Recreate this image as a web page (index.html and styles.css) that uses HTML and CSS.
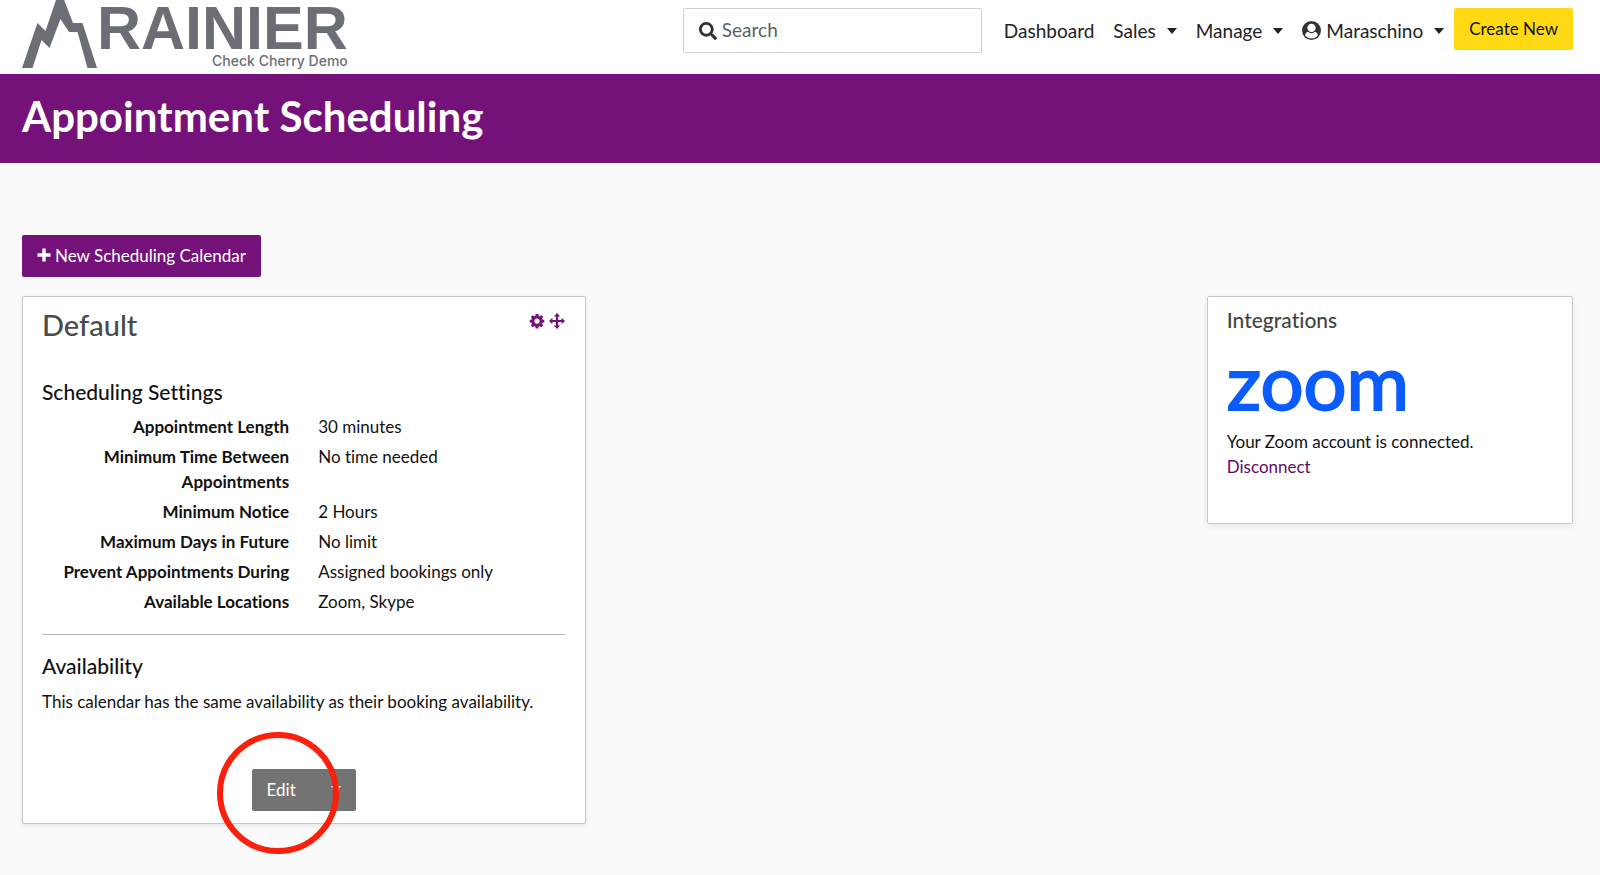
FILE: index.html
```html
<!DOCTYPE html>
<html lang="en">
<head>
<meta charset="utf-8">
<meta name="viewport" content="width=device-width, initial-scale=1">
<title>Appointment Scheduling</title>
<link rel="stylesheet" href="styles.css">
</head>
<body>
<header class="topbar">
  <a class="brand" href="#" aria-label="Rainier">
    <svg class="brand-mark" viewBox="0 0 75 68" aria-hidden="true"><path d="M0 68 15.500 23 23.500 31 35 -3H41L51 23H60.500L75 68H65.500L55.500 32H47L38.500 19 27.500 48 19.500 40 10.500 68Z"/></svg>
    <span class="brand-text">
      <span class="brand-name">RAINIER</span>
      <span class="brand-sub">Check Cherry Demo</span>
    </span>
  </a>
  <div class="topbar-right">
    <label class="search">
      <svg class="search-icon" viewBox="0 0 512 512" aria-hidden="true"><path d="M505 442.700 405.300 343c-4.500-4.500-10.600-7-17-7H372c27.600-35.300 44-79.700 44-128C416 93.100 322.900 0 208 0S0 93.100 0 208s93.100 208 208 208c48.300 0 92.700-16.400 128-44v16.300c0 6.400 2.500 12.500 7 17l99.700 99.700c9.400 9.400 24.600 9.400 33.900 0l28.300-28.300c9.400-9.400 9.400-24.600.1-34zM208 336c-70.700 0-128-57.200-128-128 0-70.700 57.200-128 128-128 70.700 0 128 57.200 128 128 0 70.700-57.200 128-128 128z"/></svg>
      <input class="search-input" type="search" placeholder="Search" aria-label="Search">
    </label>
    <nav class="nav" aria-label="Main">
      <a class="nav-item" href="#">Dashboard</a>
      <button class="nav-item" type="button">Sales <span class="caret"></span></button>
      <button class="nav-item" type="button">Manage <span class="caret"></span></button>
      <button class="nav-item" type="button"><svg class="user-icon" viewBox="0 0 20 20" aria-hidden="true"><circle class="user-disc" cx="10" cy="10" r="10"/><circle class="user-light" cx="10" cy="7.200" r="4.400"/><path class="user-light" d="M6.300 11.400c2.100 2 5.300 2 7.400 0 1.800.4 2.700 1.700 3 3.800a8.600 8.600 0 0 1-13.400 0c.3-2.100 1.200-3.400 3-3.800z"/></svg><span class="user-name">Maraschino</span> <span class="caret"></span></button>
    </nav>
    <button class="btn btn-create" type="button">Create New</button>
  </div>
</header>

<div class="page-band"><h1 class="page-title">Appointment Scheduling</h1></div>

<main class="content">
  <button class="btn btn-new" type="button"><svg class="plus-icon" viewBox="0 0 14 14" aria-hidden="true"><path d="M5.300.5h3.400v4.800h4.800v3.400H8.700v4.800H5.300V8.700H.5V5.300h4.800z"/></svg>New Scheduling Calendar</button>
  <div class="columns">
    <section class="card">
      <div class="card-head">
        <h2 class="card-title">Default</h2>
        <div class="card-tools">
          <button class="tool" type="button" aria-label="Settings"><svg class="tool-icon" viewBox="0 0 16 16"><path fill-rule="evenodd" d="M6.700 1h2.600l.4 1.800 1 .4 1.600-1 1.800 1.800-1 1.600.4 1 1.800.4v2.400l-1.800.4-.4 1 1 1.600-1.800 1.800-1.600-1-1 .4-.4 1.800H6.700l-.4-1.800-1-.4-1.600 1-1.800-1.800 1-1.600-.4-1L.7 9.400V7l1.800-.4.4-1-1-1.600 1.800-1.800 1.600 1 1-.4zM8 5.500a2.600 2.600 0 1 0 0 5.200 2.600 2.600 0 0 0 0-5.200z"/></svg></button>
          <button class="tool" type="button" aria-label="Move"><svg class="tool-icon" viewBox="0 0 16 16"><path d="M8 0l3.200 3.400H9.100v3.500h3.500V4.800L16 8l-3.400 3.200V9.100H9.100v3.500h2.100L8 16l-3.200-3.400h2.100V9.100H3.400v2.100L0 8l3.400-3.200v2.100h3.500V3.400H4.800z"/></svg></button>
        </div>
      </div>
      <h3 class="section-title section-first">Scheduling Settings</h3>
      <dl class="settings">
        <div class="row"><dt>Appointment Length</dt><dd>30 minutes</dd></div>
        <div class="row"><dt>Minimum Time Between Appointments</dt><dd>No time needed</dd></div>
        <div class="row"><dt>Minimum Notice</dt><dd>2 Hours</dd></div>
        <div class="row"><dt>Maximum Days in Future</dt><dd>No limit</dd></div>
        <div class="row"><dt>Prevent Appointments During</dt><dd>Assigned bookings only</dd></div>
        <div class="row"><dt>Available Locations</dt><dd>Zoom, Skype</dd></div>
      </dl>
      <hr class="rule">
      <h3 class="section-title">Availability</h3>
      <p class="note">This calendar has the same availability as their booking availability.</p>
      <div class="actions">
        <div class="edit-group">
          <button class="btn btn-edit" type="button">Edit</button>
          <button class="btn btn-more" type="button" aria-label="More actions"><span class="caret"></span></button>
          <span class="highlight-ring"></span>
        </div>
      </div>
    </section>
    <aside class="card card-side">
      <h2 class="side-title">Integrations</h2>
      <div class="zoom-logo">zoom</div>
      <p class="side-text">Your Zoom account is connected.</p>
      <a class="link" href="#">Disconnect</a>
    </aside>
  </div>
</main>
</body>
</html>
```
FILE: styles.css
```css
* { box-sizing: border-box; }

body {
  margin: 0;
  background: #fafafa;
  color: #111;
  font: 17px/25px Lato, "Open Sans", sans-serif;
  font-variant-ligatures: none;
}

h1, h2, h3, p, dl, dd { margin: 0; }
button, input { font: inherit; color: inherit; }
button { cursor: pointer; }
svg { display: block; flex: none; }

.topbar {
  display: flex;
  justify-content: space-between;
  min-height: 74px;
  padding: 0 27px 0 22px;
  background: #fff;
}
.brand {
  display: flex;
  color: #6b6e75;
  text-decoration: none;
}
.brand-mark { width: 75px; height: 68px; fill: currentColor; }
.brand-text { display: flex; flex-direction: column; align-items: flex-end; }
.brand-name { font: 700 61px/56px "Liberation Sans", Arial, sans-serif; }
.brand-sub { font: 500 14px/10px Inter, sans-serif; }

.topbar-right { display: flex; align-items: flex-start; padding-top: 8px; }
.search {
  display: flex;
  align-items: center;
  gap: 5px;
  width: 299px;
  height: 45px;
  margin-right: 22px;
  padding: 0 15px;
  border: 1px solid #d2d2d2;
  border-radius: 2px;
}
.search-icon { width: 18px; height: 18px; fill: #333; }
.search-input {
  flex: 1;
  min-width: 0;
  padding: 0 0 2px;
  border: 0;
  outline: 0;
  background: none;
  font-size: 19px;
}
.search-input::placeholder { color: #5c5f63; opacity: 1; }

.nav { display: flex; gap: 19px; padding-top: 10px; margin-right: 10px; }
.nav-item {
  display: flex;
  align-items: center;
  padding: 0;
  border: 0;
  background: none;
  color: #222;
  font-size: 19px;
  line-height: 25px;
  text-decoration: none;
}
.caret {
  margin-left: 11px;
  border: 5px solid transparent;
  border-top: 6px solid currentColor;
  border-bottom: 0;
}
.user-icon { width: 19px; height: 19px; margin-right: 5px; }
.user-disc { fill: #333; }
.user-light { fill: #fff; }

.btn {
  display: inline-flex;
  align-items: center;
  justify-content: center;
  height: 42px;
  padding: 0 15px 2px;
  border: 0;
  border-radius: 2px;
}
.btn-create { background: #ffd914; color: #111; }

.page-band { padding: 17px 22px 22px; background: #75127a; }
.page-title { color: #fff; font-size: 42px; font-weight: 700; line-height: 50px; }

.content { padding: 72px 27px 50px 22px; }
.btn-new { background: #75127a; color: #fff; }
.plus-icon { width: 14px; height: 14px; margin-right: 4px; fill: currentColor; }

.columns {
  display: grid;
  grid-template-columns: 564fr 366fr;
  column-gap: 40%;
  align-items: start;
  margin-top: 19px;
}
.card {
  padding: 10px 20px 12px 19px;
  border: 1px solid #c8c8c8;
  border-radius: 2px;
  background: #fff;
  box-shadow: 0 2px 6px rgba(0, 0, 0, 0.08);
}
.card-head { display: flex; justify-content: space-between; }
.card-title { color: #4a4a4a; font-size: 29px; font-weight: 500; line-height: 36px; }
.card-tools { display: flex; align-items: flex-start; gap: 4px; padding-top: 6px; }
.tool { padding: 0; border: 0; background: none; color: #75127a; }
.tool-icon { width: 16px; height: 16px; fill: currentColor; }

.section-title { font-size: 21px; font-weight: 500; line-height: 26px; }
.section-first { margin-top: 36px; }

.settings { display: grid; gap: 5px; margin-top: 9px; }
.row { display: grid; grid-template-columns: 1fr 1fr; column-gap: 29px; }
.row dt { font-weight: 700; text-align: right; }

.rule { margin: 20px 0 18px; border: 0; border-top: 1px solid #b5b5b5; }
.note { margin-top: 10px; }

.actions { display: flex; justify-content: center; margin-top: 55px; }
.edit-group { position: relative; display: flex; }
.btn-edit, .btn-more { background: #737373; color: #fff; }
.btn-edit { padding-right: 20px; border-radius: 2px 0 0 2px; }
.btn-more { border-radius: 0 2px 2px 0; }
.btn-more .caret { margin: 0; }
.highlight-ring {
  position: absolute;
  top: -37px;
  left: -35px;
  width: 122px;
  height: 122px;
  border: 6px solid #fb200b;
  border-radius: 50%;
  pointer-events: none;
}

.card-side { padding-bottom: 44px; }
.side-title { color: #444; font-size: 21px; font-weight: 500; line-height: 26px; }
.zoom-logo {
  margin: 20px 0;
  color: #0b5cff;
  font-size: 76px;
  font-weight: 400;
  line-height: 56px;
  -webkit-text-stroke: 2px #0b5cff;
}
.link { color: #5f0a68; text-decoration: none; }
```
